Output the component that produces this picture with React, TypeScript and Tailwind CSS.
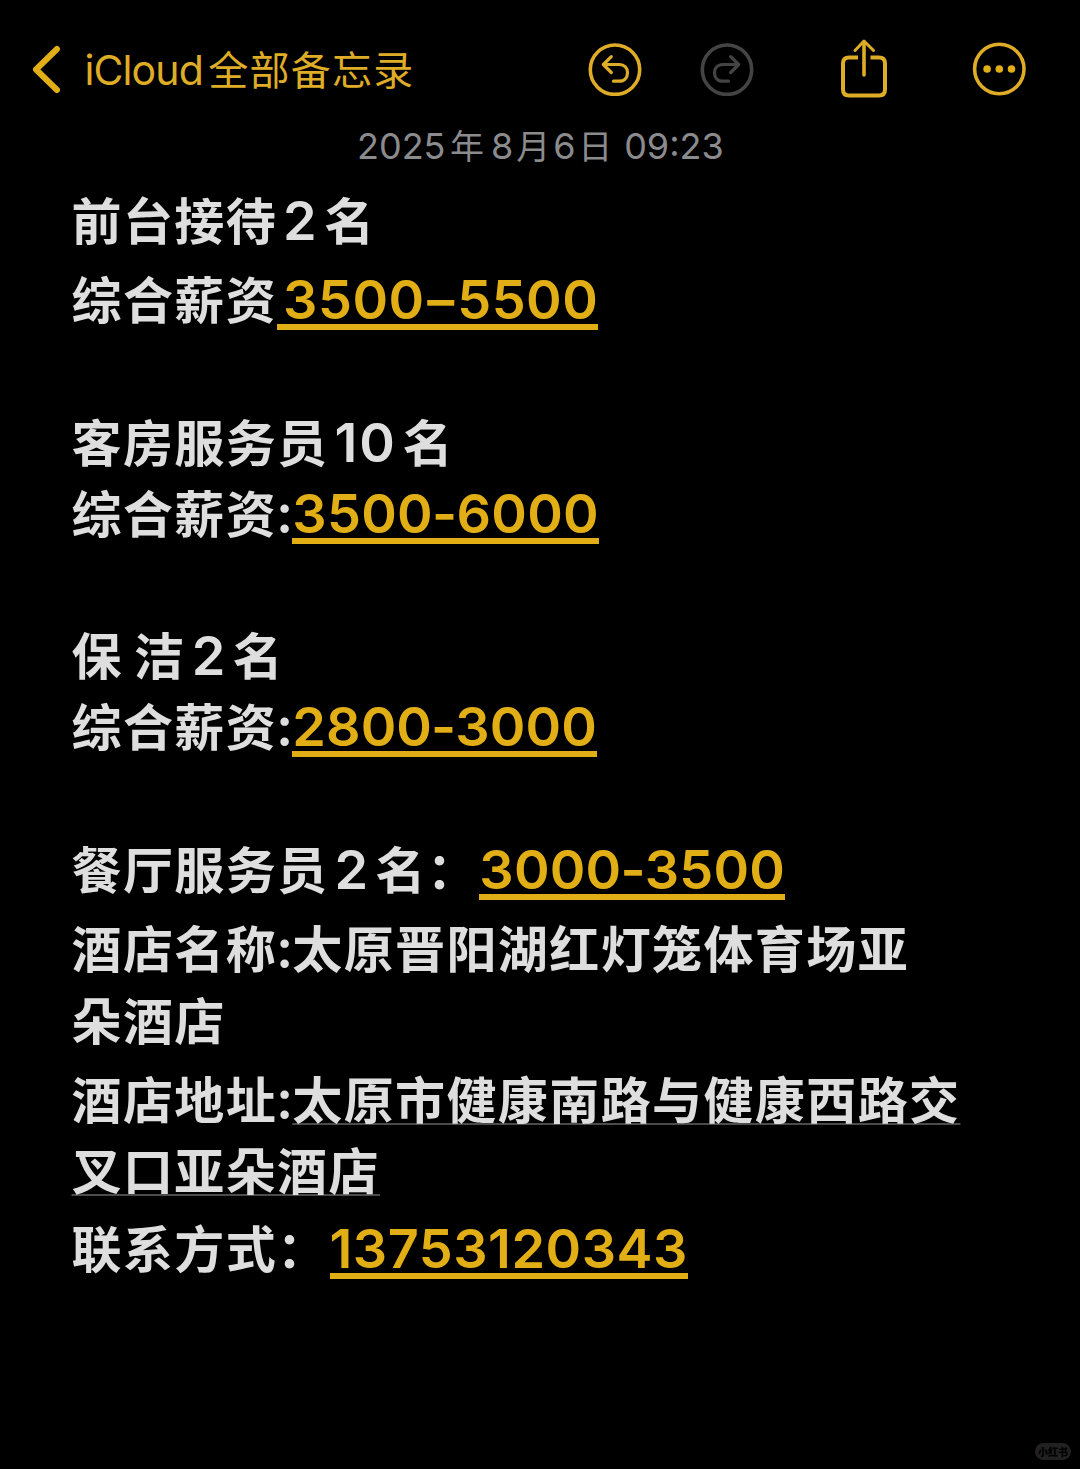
import React from "react";

type RowProps = {
  children?: React.ReactNode;
  className?: string;
};

const Row: React.FC<RowProps> = ({ children, className = "" }) => (
  <div
    className={`flex items-baseline h-[71.2px] whitespace-pre ${className}`}
  >
    {children}
  </div>
);

const Num: React.FC<RowProps> = ({ children, className = "" }) => (
  <span
    className={`text-[54px] font-semibold leading-[48px] font-['Inter','Noto_Sans_CJK_SC',sans-serif] ${className}`}
  >
    {children}
  </span>
);

const Colon = () => <Num className="-ml-[1px] -mr-[2.5px]">:</Num>;

const Link: React.FC<RowProps> = ({ children, className = "" }) => (
  <a
    className={`block text-[54px] font-semibold leading-[48px] text-[#e2ae16] border-b-[6px] border-[#e2ae16] font-['Inter','Noto_Sans_CJK_SC',sans-serif] ${className}`}
  >
    {children}
  </a>
);

const Address: React.FC<RowProps> = ({ children }) => (
  <span className="underline decoration-[#4a4b4b] decoration-2 underline-offset-[4px] [text-decoration-skip-ink:none]">
    {children}
  </span>
);

const UndoIcon = ({ className = "" }: { className?: string }) => (
  <svg
    className={className}
    width="54"
    height="54"
    viewBox="0 0 54 54"
    fill="none"
    stroke="currentColor"
    strokeLinecap="round"
    strokeLinejoin="round"
  >
    <circle cx="27" cy="27.7" r="24.7" strokeWidth="3.6" />
    <path
      d="M23.3 14.7 L15.3 22.5 L23.3 30.5 M15.8 22.5 H31 C36.5 22.5 39.5 26.2 39.5 30.8 C39.5 35.6 36.5 39.2 31 39.2 H25.5"
      strokeWidth="3.2"
    />
  </svg>
);

const Header = () => (
  <header className="flex items-center h-[138px] pl-[31px] pr-[54px] shrink-0 text-[#deac27]">
    <svg width="30" height="50" viewBox="0 0 30 50" fill="none">
      <path
        d="M26 5 L5 25.5 L26 46"
        stroke="#e2ae16"
        strokeWidth="6"
        strokeLinecap="round"
        strokeLinejoin="round"
      />
    </svg>
    <div className="ml-[23.5px] flex items-baseline whitespace-nowrap leading-[60px]">
      <span className="text-[41px] font-normal tracking-[-0.9px] font-['Inter','Noto_Sans_CJK_SC',sans-serif]">
        iCloud
      </span>
      <span className="ml-[5.5px] text-[40px] tracking-[1.2px] font-['Noto_Sans_CJK_SC',sans-serif]">
        全部备忘录
      </span>
    </div>
    <div className="ml-auto flex items-center">
      <UndoIcon className="text-[#deac27]" />
      <UndoIcon className="ml-[58px] text-[#444] -scale-x-100" />
      <svg
        className="ml-[86px]"
        width="48"
        height="62"
        viewBox="0 0 48 62"
        fill="none"
        stroke="currentColor"
        strokeWidth="4"
        strokeLinecap="round"
        strokeLinejoin="round"
      >
        <path
          d="M18 19.5 H9 Q3 19.5 3 25.5 V51.5 Q3 57.5 9 57.5 H39 Q45 57.5 45 51.5 V25.5 Q45 19.5 39 19.5 H30.5"
          strokeLinecap="butt"
        />
        <path d="M24 37 V4" strokeWidth="3.6" />
        <path d="M15 12.5 L24 3 L33.5 12.5" strokeWidth="3" />
      </svg>
      <svg
        className="ml-[84px]"
        width="54"
        height="54"
        viewBox="0 0 54 54"
        fill="none"
      >
        <circle cx="27.3" cy="27" r="24.7" stroke="currentColor" strokeWidth="3.6" />
        <circle cx="15.1" cy="27" r="3.8" fill="#e2ae16" />
        <circle cx="27.3" cy="27" r="3.8" fill="#e2ae16" />
        <circle cx="39.5" cy="27" r="3.8" fill="#e2ae16" />
      </svg>
    </div>
  </header>
);

const App = () => {
  return (
    <div className="relative w-[1080px] h-[1469px] bg-black overflow-hidden flex flex-col">
      <Header />

      <div className="h-[48px] -mt-[16px] pl-[357px] flex items-baseline whitespace-pre leading-[48px] text-[#8b8b8e] text-[36px] font-['Inter','Noto_Sans_CJK_SC',sans-serif]">
        <span>2025</span>
        <span className="ml-[4.5px] mr-[7px] text-[34px]">年</span>
        <span>8</span>
        <span className="mx-[3px] text-[34px]">月</span>
        <span>6</span>
        <span className="ml-[2.5px] text-[34px]">日</span>
        <span className="ml-[12px]">09:23</span>
      </div>

      <main className="pl-[71.5px] pt-[13px] text-[#dedede] text-[50px] leading-[71.2px] tracking-[1.4px] font-bold font-['Noto_Sans_CJK_SC',sans-serif]">
        <Row>
          <span>前台接待</span>
          <Num className="ml-[6px] mr-[6px]">2</Num>
          <span>名</span>
        </Row>
        <Row className="mt-[8px]">
          <span>综合薪资</span>
          <Link className="pl-[6px] tracking-[0.5px]">
            3500<span className="mx-[2.5px]">–</span>5500
          </Link>
        </Row>
        <Row />
        <Row>
          <span>客房服务员</span>
          <Num className="ml-[6px] mr-[6px] tracking-[1.9px]">10</Num>
          <span>名</span>
        </Row>
        <Row>
          <span>综合薪资</span>
          <Colon />
          <Link className="tracking-[0.3px]">
            3500<span className="-mx-[1px]">-</span>6000
          </Link>
        </Row>
        <Row />
        <Row>
          <span>保</span>
          <span className="ml-[11px]">洁</span>
          <Num className="ml-[6.5px] mr-[6px]">2</Num>
          <span>名</span>
        </Row>
        <Row>
          <span>综合薪资</span>
          <Colon />
          <Link className="tracking-[0.1px]">
            2800<span className="-mx-[1px]">-</span>3000
          </Link>
        </Row>
        <Row />
        <Row>
          <span>餐厅服务员</span>
          <Num className="ml-[6px] mr-[6px]">2</Num>
          <span>名：</span>
          <Link className="ml-[1px] tracking-[0.2px]">
            3000<span className="-mx-[1px]">-</span>3500
          </Link>
        </Row>
        <Row className="mt-[8.5px]">
          <span>酒店名称</span>
          <Colon />
          <span>太原晋阳湖红灯笼体育场亚</span>
        </Row>
        <Row>
          <span>朵酒店</span>
        </Row>
        <Row className="mt-[8px]">
          <span>酒店地址</span>
          <Colon />
          <Address>太原市健康南路与健康西路交</Address>
        </Row>
        <Row>
          <Address>叉口亚朵酒店</Address>
        </Row>
        <Row className="mt-[7px]">
          <span>联系方式：</span>
          <Link className="ml-[1px] tracking-[0.5px]">13753120343</Link>
        </Row>
      </main>

      <div className="absolute left-[1035px] top-[1443px] w-[36px] h-[17px] rounded-full bg-[#212121] text-black text-[10px] font-black leading-[17px] text-center font-['Noto_Sans_CJK_SC',sans-serif]">
        小红书
      </div>
    </div>
  );
};

export default App;
